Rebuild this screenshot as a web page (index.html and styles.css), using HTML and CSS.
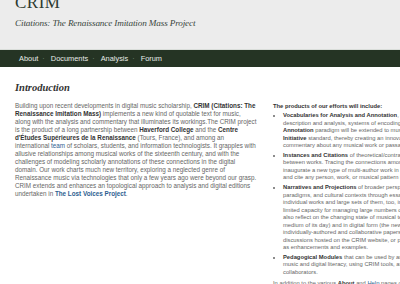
FILE: index.html
```html
<!DOCTYPE html>
<html lang="en">
<head>
    <meta charset="UTF-8">
    <title>CRIM</title>
    <link rel="stylesheet" href="styles.css">
</head>
<body>
    <div class="page">
        <div class="header">
            <div class="site-title">CRIM</div>
            <div class="site-subtitle">Citations: The Renaissance Imitation Mass Project</div>
        </div>

        <div class="nav">
            <a href="#">About</a><span class="sep">&middot;</span>
            <a href="#">Documents</a><span class="sep">&middot;</span>
            <a href="#">Analysis</a><span class="sep">&middot;</span>
            <a href="#">Forum</a>
        </div>

        <div class="content">
            <h1>Introduction</h1>
            <div class="columns">
                <div class="col-left">
                    <p>Building upon recent developments in digital music scholarship, <b>CRIM (Citations: The</b><br>
                    <b>Renaissance Imitation Mass)</b> implements a new kind of quotable text for music,<br>
                    along with the analysis and commentary that illuminates its workings.The CRIM project<br>
                    is the product of a long partnership between <b>Haverford College</b> and the <b>Centre</b><br>
                    <b>d'&Eacute;tudes Sup&eacute;rieures de la Renaissance</b> (Tours, France), and among an<br>
                    international <a href="#">team</a> of scholars, students, and information technologists. It grapples with<br>
                    allusive relationships among musical works of the sixteenth century, and with the<br>
                    challenges of modeling scholarly annotations of these connections in the digital<br>
                    domain. Our work charts much new territory, exploring a neglected genre of<br>
                    Renaissance music via technologies that only a few years ago were beyond our grasp.<br>
                    CRIM extends and enhances an topological approach to analysis and digital editions<br>
                    undertaken in <a href="#"><b>The Lost Voices Project</b></a>.</p>
                </div>
                <div class="col-right">
                    <p class="lead"><b>The products of our efforts will include:</b></p>
                    <ul>
                        <li><b>Vocabularies for Analysis and Annotation</b>, including a controlled<br>
                        description and analysis, systems of encoding, and the Web<br>
                        <b>Annotation</b> paradigm will be extended to music through the Music Encoding<br>
                        <b>Initiative</b> standard, thereby creating an innovative system for scholarly<br>
                        commentary about any musical work or passage.</li>
                        <li><b>Instances and Citations</b> of theoretical/contrapuntal relationships<br>
                        between works. Tracing the connections among works, CRIM will<br>
                        inaugurate a new type of multi-author work in music that lets users find<br>
                        and cite any person, work, or musical pattern in the corpus.</li>
                        <li><b>Narratives and Projections</b> of broader perspectives on musical<br>
                        paradigms, and cultural contexts through essays that consider both<br>
                        individual works and large sets of them, too, in ways beyond the<br>
                        limited capacity for managing large numbers of works. These essays<br>
                        also reflect on the changing state of musical texts, both in print (the<br>
                        medium of its day) and in digital form (the new medium). They include<br>
                        individually-authored and collaborative papers, as well as the<br>
                        discussions hosted on the CRIM website, or published with our editions<br>
                        as enhancements and examples.</li>
                        <li><b>Pedagogical Modules</b> that can be used by any teacher of Renaissance<br>
                        music and digital literacy, using CRIM tools, as developed by our<br>
                        collaborators.</li>
                    </ul>
                    <p>In addition to the various <b>About</b> and <a href="#">Help</a> pages on this site, you can learn more about the project.</p>
                </div>
            </div>
        </div>
    </div>
</body>
</html>
```

FILE: styles.css
```css
body {
    margin: 0;
    background-color: #ffffff;
    font-family: "Liberation Sans", Arial, sans-serif;
    overflow: hidden;
}

.page {
    width: 560px;
}

/* Grey header with the site name */
.header {
    display: flow-root;
    background-color: #ececec;
    height: 50px;
    padding: 0 15px;
    box-sizing: border-box;
    border-bottom: 1px solid #d9ddd9;
}

.site-title {
    font-family: "Liberation Serif", "Times New Roman", serif;
    font-size: 17px;
    line-height: 17px;
    margin-top: -6px;
    color: #2d3a31;
    letter-spacing: 0.5px;
}

.site-subtitle {
    font-family: "Liberation Serif", "Times New Roman", serif;
    font-style: italic;
    font-size: 9.2px;
    line-height: 12px;
    margin-top: 6px;
    color: #3a463d;
    letter-spacing: -0.15px;
}

/* Dark green navigation bar */
.nav {
    background-color: #253424;
    height: 17px;
    padding-left: 19px;
    display: flex;
    align-items: center;
    font-size: 7.4px;
}

.nav a {
    color: #e8ece8;
    text-decoration: none;
}

.nav .sep {
    color: #7d8a7d;
    margin: 0 6px 0 4px;
}

/* Main content */
.content {
    padding: 0 15px;
}

h1 {
    font-family: "Liberation Serif", "Times New Roman", serif;
    font-style: italic;
    font-weight: bold;
    font-size: 10.5px;
    color: #333333;
    margin: 15px 0 0 0;
    line-height: 12px;
}

.columns {
    display: flex;
    gap: 10px;
    margin-top: 8px;
}

.col-left {
    width: 248px;
    flex-shrink: 0;
}

.col-left p {
    font-size: 6.3px;
    line-height: 8px;
    white-space: nowrap;
}

.col-right {
    width: 230px;
    flex-shrink: 0;
    white-space: nowrap;
}

p, li {
    font-size: 5.8px;
    line-height: 7.5px;
    color: #666666;
}

p {
    margin: 0;
}

b {
    color: #333333;
}

a {
    color: #2d5e90;
    text-decoration: none;
}

a b {
    color: #2d5e90;
}

.col-right .lead {
    margin-top: 0.5px;
}

ul {
    margin: 2px 0 4px 0;
    padding-left: 10px;
}

li {
    margin-bottom: 2.3px;
}
```
